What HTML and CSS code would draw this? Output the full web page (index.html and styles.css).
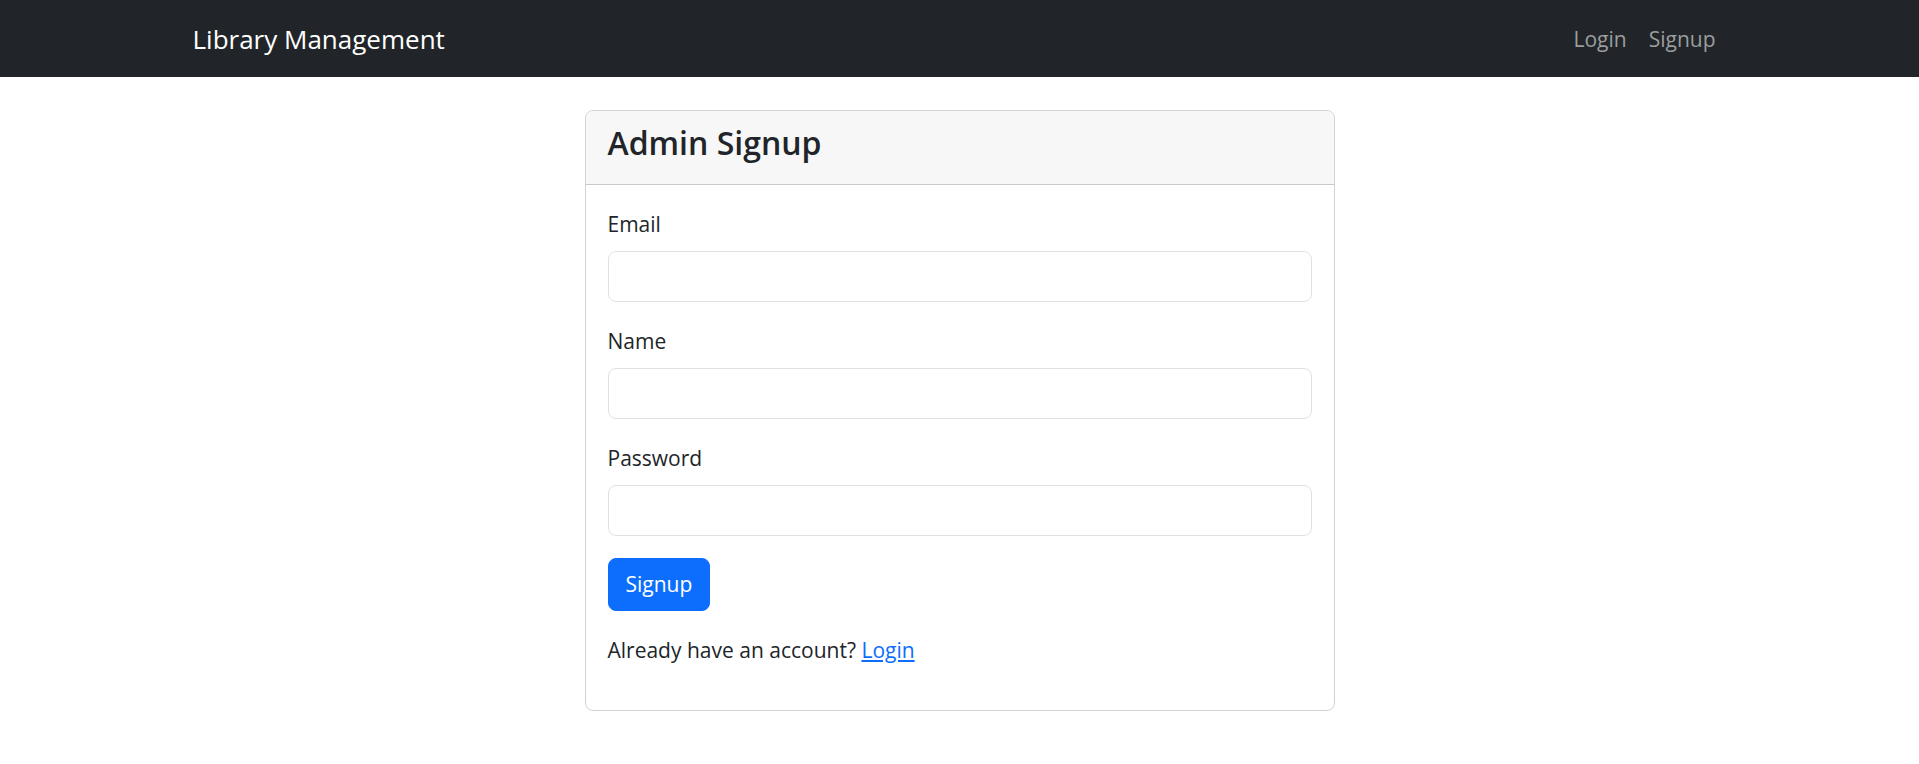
FILE: index.html
```html
<!DOCTYPE html>
<html lang="en">
<head>
  <meta charset="utf-8">
  <meta name="viewport" content="width=device-width, initial-scale=1">
  <title>Library Management</title>
  <link rel="stylesheet" href="styles.css">
</head>
<body>
  <nav class="navbar">
    <div class="container navbar-inner">
      <a class="brand" href="#">Library Management</a>
      <div class="nav-links">
        <a class="nav-link" href="#login">Login</a>
        <a class="nav-link" href="#signup">Signup</a>
      </div>
    </div>
  </nav>
  <main class="container">
    <section class="card">
      <header class="card-header">
        <h4 class="card-title">Admin Signup</h4>
      </header>
      <div class="card-body">
        <form>
          <div class="field">
            <label class="label" for="email">Email</label>
            <input class="input" type="email" id="email">
          </div>
          <div class="field">
            <label class="label" for="name">Name</label>
            <input class="input" type="text" id="name">
          </div>
          <div class="field">
            <label class="label" for="password">Password</label>
            <input class="input" type="password" id="password">
          </div>
          <button class="button" type="submit">Signup</button>
        </form>
        <p class="note">Already have an account? <a class="link" href="#login">Login</a></p>
      </div>
    </section>
  </main>
</body>
</html>
```
FILE: styles.css
```css
* {
  box-sizing: border-box;
}

body {
  margin: 0;
  background: #fff;
  color: #212529;
  font-family: "Segoe UI", "Open Sans", "Noto Sans", sans-serif;
  font-size: 21px;
  line-height: 33px;
}

.container {
  width: 100%;
  max-width: 1568px;
  margin: 0 auto;
  padding: 0 17px;
}

.navbar {
  padding: 12px 0 10px;
  background: #212529;
}

.navbar-inner {
  display: flex;
  align-items: center;
  justify-content: space-between;
}

.brand {
  color: #fff;
  font-size: 26px;
  text-decoration: none;
}

.nav-links {
  display: flex;
}

.nav-link {
  padding: 11px;
  color: #9b9d9e;
  text-decoration: none;
}

.card {
  width: 100%;
  max-width: 750px;
  margin: 33px auto;
  border: 1px solid #d2d3d3;
  border-radius: 8px;
  background: #fff;
  overflow: hidden;
}

.card-header {
  padding: 11px 22px;
  border-bottom: 1px solid #c9c9c9;
  background: #f7f7f7;
}

.card-title {
  margin: 0 0 9px;
  font-size: 32px;
  font-weight: 600;
  line-height: 42px;
}

.card-body {
  padding: 22px;
}

.field {
  margin-bottom: 22px;
}

.label {
  display: block;
  margin-bottom: 9px;
  line-height: 35px;
}

.input {
  display: block;
  width: 100%;
  padding: 8px 16px;
  border: 1px solid #dee2e6;
  border-radius: 8px;
  background: #fff;
  color: inherit;
  font: inherit;
}

.button {
  display: block;
  padding: 9px 17px;
  border: 1px solid #0d6efd;
  border-radius: 8px;
  background: #0d6efd;
  color: #fff;
  font: inherit;
  cursor: pointer;
}

.note {
  margin: 22px 0 20px;
  line-height: 35px;
}

.link {
  color: #0d6efd;
}
```
